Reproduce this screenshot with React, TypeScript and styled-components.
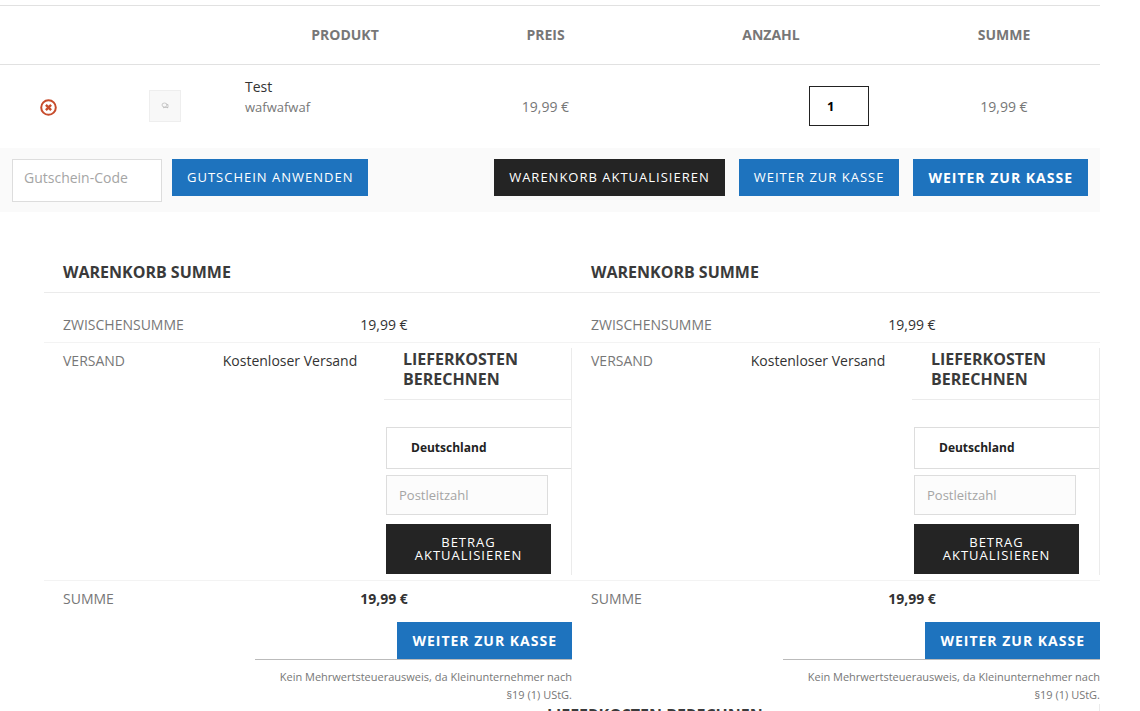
import React, { useId } from "react";
import styled, { createGlobalStyle, css } from "styled-components";

const GlobalStyle = createGlobalStyle`
  *, *::before, *::after { box-sizing: border-box; }
  html { scrollbar-width: none; }
  body {
    margin: 0;
    background: #fff;
    color: #777;
    font: 400 14px/20px "Open Sans", "Noto Sans", sans-serif;
  }
  button, input, select { font-family: inherit; margin: 0; border-radius: 0; }
`;

const Page = styled.main`
  height: 100vh;
  overflow: hidden;
  padding: 5px 40px 0 0;
`;

const CartTable = styled.table`
  width: 100%;
  table-layout: fixed;
  border-collapse: separate;
  border-spacing: 0;
  border-top: 1px solid #e1e1e1;
  text-align: center;
`;

const HeadCell = styled.th`
  height: 59px;
  padding: 0;
  border-bottom: 1px solid #e1e1e1;
  font-weight: 700;
`;

const Cell = styled.td<{ $align?: "left" | "right"; $media?: boolean }>`
  height: 83px;
  padding: 0;
  text-align: ${(p) => p.$align ?? "center"};
  ${(p) => p.$align === "left" && css`padding: 12px; vertical-align: top;`}
  ${(p) => p.$align === "right" && css`padding-right: 39px;`}
  ${(p) => p.$media && css`padding-bottom: 2px;`}
`;

const ProductLink = styled.a`
  display: block;
  color: #333;
  text-decoration: none;
`;

const ProductNote = styled.div`
  font-size: 13px;
`;

const RemoveButton = styled.button`
  display: inline-flex;
  padding: 0;
  border: 0;
  background: none;
  vertical-align: middle;
  cursor: pointer;
`;

const Thumb = styled.span`
  display: inline-flex;
  align-items: center;
  justify-content: center;
  width: 32px;
  height: 32px;
  border: 1px solid #eee;
  background: #f8f8f8;
  vertical-align: middle;
`;

const QuantityInput = styled.input`
  width: 60px;
  height: 40px;
  padding: 0 17px;
  border: 1px solid #222;
  background: #fff;
  color: #000;
  font-size: 13px;
  font-weight: 700;
  vertical-align: middle;
`;

const ActionBar = styled.form`
  display: flex;
  align-items: flex-start;
  gap: 10px;
  padding: 11px 12px 10px;
  background: #fafafa;
`;

const CheckoutActions = styled.div`
  display: flex;
  gap: 14px;
  margin-left: auto;
`;

const CouponInput = styled.input`
  width: 150px;
  height: 43px;
  padding: 0 11px 6px;
  border: 1px solid #ddd;
  background: #fff;
  font-size: 14px;
  &::placeholder { color: #a5a5a5; opacity: 1; }
`;

const Button = styled.button<{ $dark?: boolean; $strong?: boolean }>`
  padding: 12px 15px;
  border: 0;
  background: ${(p) => (p.$dark ? "#242424" : "#1e73be")};
  color: #fff;
  font-size: ${(p) => (p.$strong ? "14px" : "13px")};
  font-weight: ${(p) => (p.$strong ? 700 : 400)};
  line-height: 13px;
  letter-spacing: 1px;
  text-transform: uppercase;
  cursor: pointer;
`;

const TotalsGrid = styled.div`
  display: grid;
  grid-template-columns: 1fr 1fr;
  margin: 50px 0 0 44px;
`;

const SectionTitle = styled.h2`
  margin: 0;
  padding: 0 19px 10px;
  border-bottom: 1px solid #ebebeb;
  color: #3a3a3a;
  font-size: 16px;
  font-weight: 700;
  line-height: 20px;
  text-transform: uppercase;
`;

const TotalsTable = styled.table`
  width: 100%;
  margin-top: 14px;
  table-layout: fixed;
  border-collapse: separate;
  border-spacing: 0;
`;

const Row = styled.tr<{ $last?: boolean }>`
  & > th, & > td {
    border-bottom: ${(p) => (p.$last ? "0" : "1px solid #f3f3f3")};
  }
`;

const Label = styled.th`
  padding: 8px 0 7px 19px;
  font-weight: 400;
  text-align: left;
  text-transform: uppercase;
  vertical-align: top;
`;

const Value = styled.td<{ $bold?: boolean }>`
  padding: 8px 0 7px;
  color: #333;
  font-weight: ${(p) => (p.$bold ? 700 : 400)};
  text-align: center;
  vertical-align: top;
`;

const CalculatorCell = styled.td`
  padding: 5px 0;
`;

const Calculator = styled.form`
  display: flex;
  flex-direction: column;
  padding: 1px 0;
  border-right: 1px solid #ebebeb;
`;

const Fields = styled.div`
  display: flex;
  flex-direction: column;
  padding: 27px 0 0 2px;
`;

const CountrySelect = styled.select`
  appearance: none;
  height: 42px;
  padding: 0 24px 2px;
  border: 1px solid #ddd;
  border-right: 0;
  background: #fff;
  color: #222;
  font-size: 12px;
  font-weight: 700;
`;

const PostcodeInput = styled.input`
  height: 40px;
  margin: 6px 23px 9px 0;
  padding: 0 12px;
  border: 1px solid #ddd;
  background: #fcfcfc;
  font-size: 13px;
  &::placeholder { color: #a5a5a5; opacity: 1; }
`;

const UpdateButton = styled(Button)`
  margin-right: 20px;
`;

const CheckoutBlock = styled.div`
  display: flex;
  flex-direction: column;
  align-items: flex-end;
  margin: 6px 0 0 40%;
`;

const TaxNote = styled.p`
  align-self: stretch;
  margin: 0;
  padding: 8px 0 0 12px;
  border-top: 1px solid #bbb;
  font-size: 11px;
  line-height: 18px;
  text-align: right;
`;

const ShippingSection = styled.section`
  width: 52%;
  margin-left: auto;
  padding-top: 1px;
  border-right: 1px solid #ebebeb;
`;

function RemoveIcon() {
  return (
    <svg width="17" height="17" viewBox="0 0 17 17" fill="none" stroke="#c74c2c" aria-hidden="true">
      <circle cx="8.500" cy="8.500" r="7.300" strokeWidth="2" />
      <path d="M5.900 5.900l5.200 5.200M11.100 5.900l-5.200 5.200" strokeWidth="2.400" />
    </svg>
  );
}

function PlaceholderIcon() {
  return (
    <svg width="8" height="7" viewBox="0 0 8 7" fill="none" stroke="#bdbdbd" aria-hidden="true">
      <ellipse cx="3.500" cy="3" rx="2.500" ry="2" strokeWidth=".8" />
      <path d="M5.500 2.500h1.500v3h-4M2.500 5v1.200M6.500 5v1.200" strokeWidth=".8" />
    </svg>
  );
}

function ShippingCalculator() {
  const id = useId();
  return (
    <Calculator onSubmit={(e) => e.preventDefault()}>
      <SectionTitle as="h3">Lieferkosten berechnen</SectionTitle>
      <Fields>
        <CountrySelect id={id + "country"} aria-label="Land" defaultValue="DE">
          <option value="DE">Deutschland</option>
        </CountrySelect>
        <PostcodeInput id={id + "zip"} aria-label="Postleitzahl" placeholder="Postleitzahl" size={8} />
        <UpdateButton $dark type="submit">Betrag aktualisieren</UpdateButton>
      </Fields>
    </Calculator>
  );
}

const Column = styled.col<{ $width?: number }>`
  width: ${(p) => (p.$width ? p.$width + "px" : "auto")};
`;

function CartTotals() {
  return (
    <section>
      <SectionTitle>Warenkorb Summe</SectionTitle>
      <TotalsTable>
        <colgroup>
          <Column $width={152} />
          <Column />
          <Column />
        </colgroup>
        <tbody>
          <Row>
            <Label scope="row">Zwischensumme</Label>
            <Value colSpan={2}>19,99 €</Value>
          </Row>
          <Row>
            <Label scope="row">Versand</Label>
            <Value>Kostenloser Versand</Value>
            <CalculatorCell>
              <ShippingCalculator />
            </CalculatorCell>
          </Row>
          <Row $last>
            <Label scope="row">Summe</Label>
            <Value colSpan={2} $bold>19,99 €</Value>
          </Row>
        </tbody>
      </TotalsTable>
      <CheckoutBlock>
        <Button $strong type="button">Weiter zur Kasse</Button>
        <TaxNote>Kein Mehrwertsteuerausweis, da Kleinunternehmer nach §19 (1) UStG.</TaxNote>
      </CheckoutBlock>
    </section>
  );
}

const columnWidths = [97, 136, 224, 177, 274, 192];

export default function App() {
  return (
    <>
      <GlobalStyle />
      <Page>
        <CartTable>
          <colgroup>
            {columnWidths.map((w) => (
              <Column key={w} $width={w} />
            ))}
          </colgroup>
          <thead>
            <tr>
              <HeadCell />
              <HeadCell />
              <HeadCell scope="col">PRODUKT</HeadCell>
              <HeadCell scope="col">PREIS</HeadCell>
              <HeadCell scope="col">ANZAHL</HeadCell>
              <HeadCell scope="col">SUMME</HeadCell>
            </tr>
          </thead>
          <tbody>
            <tr>
              <Cell>
                <RemoveButton type="button" aria-label="Entfernen">
                  <RemoveIcon />
                </RemoveButton>
              </Cell>
              <Cell $media>
                <Thumb>
                  <PlaceholderIcon />
                </Thumb>
              </Cell>
              <Cell $align="left">
                <ProductLink href="#">Test</ProductLink>
                <ProductNote>wafwafwaf</ProductNote>
              </Cell>
              <Cell>19,99 €</Cell>
              <Cell $align="right" $media>
                <QuantityInput aria-label="Anzahl" defaultValue="1" />
              </Cell>
              <Cell>19,99 €</Cell>
            </tr>
          </tbody>
        </CartTable>
        <ActionBar onSubmit={(e) => e.preventDefault()}>
          <CouponInput aria-label="Gutschein-Code" placeholder="Gutschein-Code" />
          <Button type="submit">Gutschein anwenden</Button>
          <CheckoutActions>
            <Button $dark type="submit">Warenkorb aktualisieren</Button>
            <Button type="button">Weiter zur Kasse</Button>
            <Button $strong type="button">Weiter zur Kasse</Button>
          </CheckoutActions>
        </ActionBar>
        <TotalsGrid>
          <CartTotals />
          <CartTotals />
        </TotalsGrid>
        <ShippingSection>
          <SectionTitle>Lieferkosten berechnen</SectionTitle>
        </ShippingSection>
      </Page>
    </>
  );
}
